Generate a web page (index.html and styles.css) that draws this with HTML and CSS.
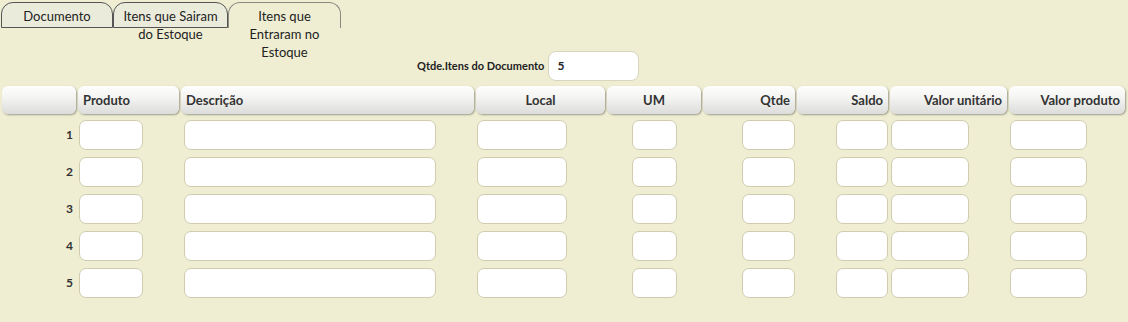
FILE: index.html
```html
<!DOCTYPE html>
<html lang="pt-BR">
<head>
  <meta charset="UTF-8">
  <title>Itens que Entraram no Estoque</title>
  <link rel="stylesheet" href="styles.css">
</head>
<body>
  <div class="tabs">
    <div class="tab">Documento</div>
    <div class="tab wrap">Itens que Sairam do Estoque</div>
    <div class="tab active">Itens que Entraram no Estoque</div>
  </div>

  <div class="qtde-row">
    <label class="qtde-label" for="qtdeItens">Qtde.Itens do Documento</label>
    <input class="qtde-input" id="qtdeItens" type="text" value="5">
  </div>

  <div class="grid">
    <div class="head"></div>
    <div class="head left">Produto</div>
    <div class="head left">Descrição</div>
    <div class="head center">Local</div>
    <div class="head center">UM</div>
    <div class="head right">Qtde</div>
    <div class="head right">Saldo</div>
    <div class="head right">Valor unitário</div>
    <div class="head right">Valor produto</div>

    <div class="num">1</div>
    <div class="cell"><input class="f w-prod"></div>
    <div class="cell"><input class="f w-desc"></div>
    <div class="cell"><input class="f w-local"></div>
    <div class="cell c"><input class="f w-um"></div>
    <div class="cell r"><input class="f w-qtde"></div>
    <div class="cell r"><input class="f w-saldo"></div>
    <div class="cell"><input class="f w-vu"></div>
    <div class="cell"><input class="f w-vp"></div>

    <div class="num">2</div>
    <div class="cell"><input class="f w-prod"></div>
    <div class="cell"><input class="f w-desc"></div>
    <div class="cell"><input class="f w-local"></div>
    <div class="cell c"><input class="f w-um"></div>
    <div class="cell r"><input class="f w-qtde"></div>
    <div class="cell r"><input class="f w-saldo"></div>
    <div class="cell"><input class="f w-vu"></div>
    <div class="cell"><input class="f w-vp"></div>

    <div class="num">3</div>
    <div class="cell"><input class="f w-prod"></div>
    <div class="cell"><input class="f w-desc"></div>
    <div class="cell"><input class="f w-local"></div>
    <div class="cell c"><input class="f w-um"></div>
    <div class="cell r"><input class="f w-qtde"></div>
    <div class="cell r"><input class="f w-saldo"></div>
    <div class="cell"><input class="f w-vu"></div>
    <div class="cell"><input class="f w-vp"></div>

    <div class="num">4</div>
    <div class="cell"><input class="f w-prod"></div>
    <div class="cell"><input class="f w-desc"></div>
    <div class="cell"><input class="f w-local"></div>
    <div class="cell c"><input class="f w-um"></div>
    <div class="cell r"><input class="f w-qtde"></div>
    <div class="cell r"><input class="f w-saldo"></div>
    <div class="cell"><input class="f w-vu"></div>
    <div class="cell"><input class="f w-vp"></div>

    <div class="num">5</div>
    <div class="cell"><input class="f w-prod"></div>
    <div class="cell"><input class="f w-desc"></div>
    <div class="cell"><input class="f w-local"></div>
    <div class="cell c"><input class="f w-um"></div>
    <div class="cell r"><input class="f w-qtde"></div>
    <div class="cell r"><input class="f w-saldo"></div>
    <div class="cell"><input class="f w-vu"></div>
    <div class="cell"><input class="f w-vp"></div>
  </div>
</body>
</html>
```

FILE: styles.css
```css
body { margin: 0; background-color: #efeed3; font-family: Lato, "Open Sans", sans-serif; color: #333; }

.tabs { display: flex; height: 51px; padding: 2px 0 0 1px; box-sizing: border-box; }
.tab { box-sizing: border-box; width: 112px; height: 26px; padding-top: 4px; border: 1px solid #555; border-radius: 12px 12px 0 0; background-color: #ebebdc; text-align: center; font-size: 13px; line-height: 18px; color: #222; }
.tab.wrap { width: 115px; padding: 4px 8px 0; }
.tab.active { width: 113px; background-color: #efeed3; border-color: #8a8a80; border-bottom: none; padding: 4px 14px 0; }

.qtde-row { display: flex; align-items: center; height: 29px; padding-left: 417px; }
.qtde-label { font-size: 11px; font-weight: bold; color: #222; margin-right: 4px; }
.qtde-input { box-sizing: border-box; width: 91px; height: 30px; border: 1px solid #d8d6bf; border-radius: 8px; background: #fff; padding: 0 8px; font-family: inherit; font-size: 12px; font-weight: bold; color: #222; outline: none; }

.grid { display: grid; grid-template-columns: 76px 103px 295px 131px 96px 94px 93px 119px 118px; grid-template-rows: 27px; grid-auto-rows: 30px; row-gap: 7px; margin: 6px 0 0 2px; }
.grid .head { height: 28px; margin-right: 2px; border-radius: 6px; background: linear-gradient(#fefefe, #f4f4f2 40%, #dcdcda); box-shadow: 1px 1px 2px rgba(0, 0, 0, 0.35); font-size: 13px; font-weight: bold; line-height: 28px; padding: 0 5px; color: #333; }
.head.left { text-align: left; }
.head.center { text-align: center; }
.head.right { text-align: right; }

.num { text-align: right; padding-right: 5px; font-size: 12px; font-weight: bold; line-height: 30px; color: #333; }
.cell { display: flex; margin-right: 2px; }
.cell.c { justify-content: center; }
.cell.r { justify-content: flex-end; }

.f { box-sizing: border-box; height: 30px; border: 1px solid #cfccb0; border-radius: 7px; background: #fff; padding: 0 6px; outline: none; font-family: inherit; }
.w-prod { width: 64px; margin-left: 1px; }
.w-desc { width: 252px; margin-left: 3px; }
.w-local { width: 90px; margin-left: 1px; }
.w-um { width: 45px; }
.w-qtde { width: 53px; }
.w-saldo { width: 52px; }
.w-vu { width: 78px; margin-left: 1px; }
.w-vp { width: 77px; margin-left: 1px; }
```
